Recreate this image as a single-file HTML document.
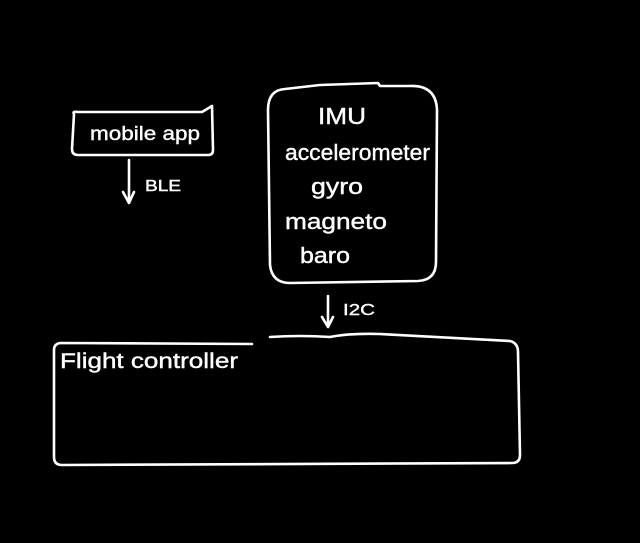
<!DOCTYPE html>
<html><head><meta charset="utf-8"><style>
html,body{margin:0;padding:0;background:#000;width:640px;height:543px;overflow:hidden}
svg{display:block}
text{font-family:"Liberation Sans",sans-serif;fill:#fff;stroke:#fff;stroke-width:0.4}
</style></head><body>
<svg width="640" height="543" viewBox="0 0 640 543">
<g fill="none" stroke="#fff" stroke-width="2.6" stroke-linecap="round" stroke-linejoin="round">
<path d="M74 114 Q72 111 78 112 L202 112 L212 106 L213 150 Q213 155 208 155 L78 155 Q72 155 72 149 Z"/>
<path d="M129 160 L129 202 M123 192 L129 203 L134 192"/>
<path d="M285 89 Q268 90 268 110 L270 265 Q272 283 290 283 L418 281 Q436 280 436 262 L437 110 Q436 85 410 86 L380 86 L378 83 L320 85 Z"/>
<path d="M328 296 L328 326 M322 317 L328 327 L333 317"/>
<path d="M270 337 Q300 335 330 337 Q350 333 380 334 L510 341 Q518 343 518 352 L520 455 Q520 463 512 463 L62 465 Q54 465 54 457 L54 350 Q54 344 60 343 L252 344"/>
</g>
<text x="90" y="140" font-size="19" textLength="110" lengthAdjust="spacingAndGlyphs">mobile app</text>
<text x="145" y="191" font-size="16" textLength="36" lengthAdjust="spacingAndGlyphs">BLE</text>
<text x="318" y="124" font-size="23" textLength="48" lengthAdjust="spacingAndGlyphs">IMU</text>
<text x="285" y="160" font-size="22" textLength="145" lengthAdjust="spacingAndGlyphs">accelerometer</text>
<text x="311" y="194" font-size="22" textLength="52" lengthAdjust="spacingAndGlyphs">gyro</text>
<text x="285" y="229" font-size="22" textLength="102" lengthAdjust="spacingAndGlyphs">magneto</text>
<text x="300" y="263" font-size="22" textLength="50" lengthAdjust="spacingAndGlyphs">baro</text>
<text x="343" y="315" font-size="16" textLength="32" lengthAdjust="spacingAndGlyphs">I2C</text>
<text x="60" y="368" font-size="21" textLength="178" lengthAdjust="spacingAndGlyphs">Flight controller</text>
</svg>
</body></html>
